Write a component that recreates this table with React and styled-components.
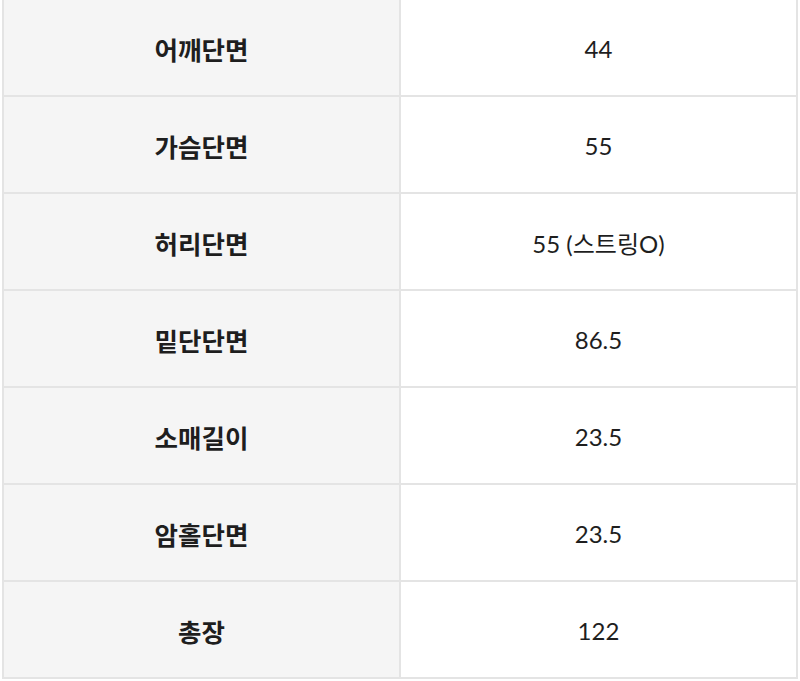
import { Fragment } from "react";
import styled, { createGlobalStyle } from "styled-components";

const GlobalStyle = createGlobalStyle`
  html, body {
    margin: 0;
    padding: 0;
    background: #fff;
  }
`;

const rows = [
  ["어깨단면", "44"],
  ["가슴단면", "55"],
  ["허리단면", "55 (스트링O)"],
  ["밑단단면", "86.5"],
  ["소매길이", "23.5"],
  ["암홀단면", "23.5"],
  ["총장", "122"],
];

const Table = styled.div`
  display: grid;
  grid-template-columns: 397px 1fr;
  width: 796px;
  margin: 0 2px;
  border-left: 2px solid #e4e4e4;
  border-right: 2px solid #e4e4e4;
  box-sizing: border-box;
`;

const Cell = styled.div`
  height: 97px;
  display: flex;
  align-items: center;
  justify-content: center;
  border-bottom: 2px solid #e4e4e4;
  background: ${({ $head }) => ($head ? "#f5f5f5" : "#fff")};
  border-right: ${({ $head }) => ($head ? "2px solid #e4e4e4" : "none")};
  color: #1e1e1e;
  font-size: ${({ $head }) => ($head ? "25.5px" : "24px")};
  font-family: ${({ $head }) =>
    $head
      ? `"Noto Sans CJK KR", sans-serif`
      : `Lato, "Noto Sans CJK KR", sans-serif`};
  font-weight: ${({ $head }) => ($head ? 700 : 400)};
  padding-top: 2px;
  box-sizing: border-box;
`;

const App = () => {
  return (
    <>
      <GlobalStyle />
      <Table>
        {rows.map(([label, value]) => (
          <Fragment key={label}>
            <Cell $head>{label}</Cell>
            <Cell>{value}</Cell>
          </Fragment>
        ))}
      </Table>
    </>
  );
};

export default App;
